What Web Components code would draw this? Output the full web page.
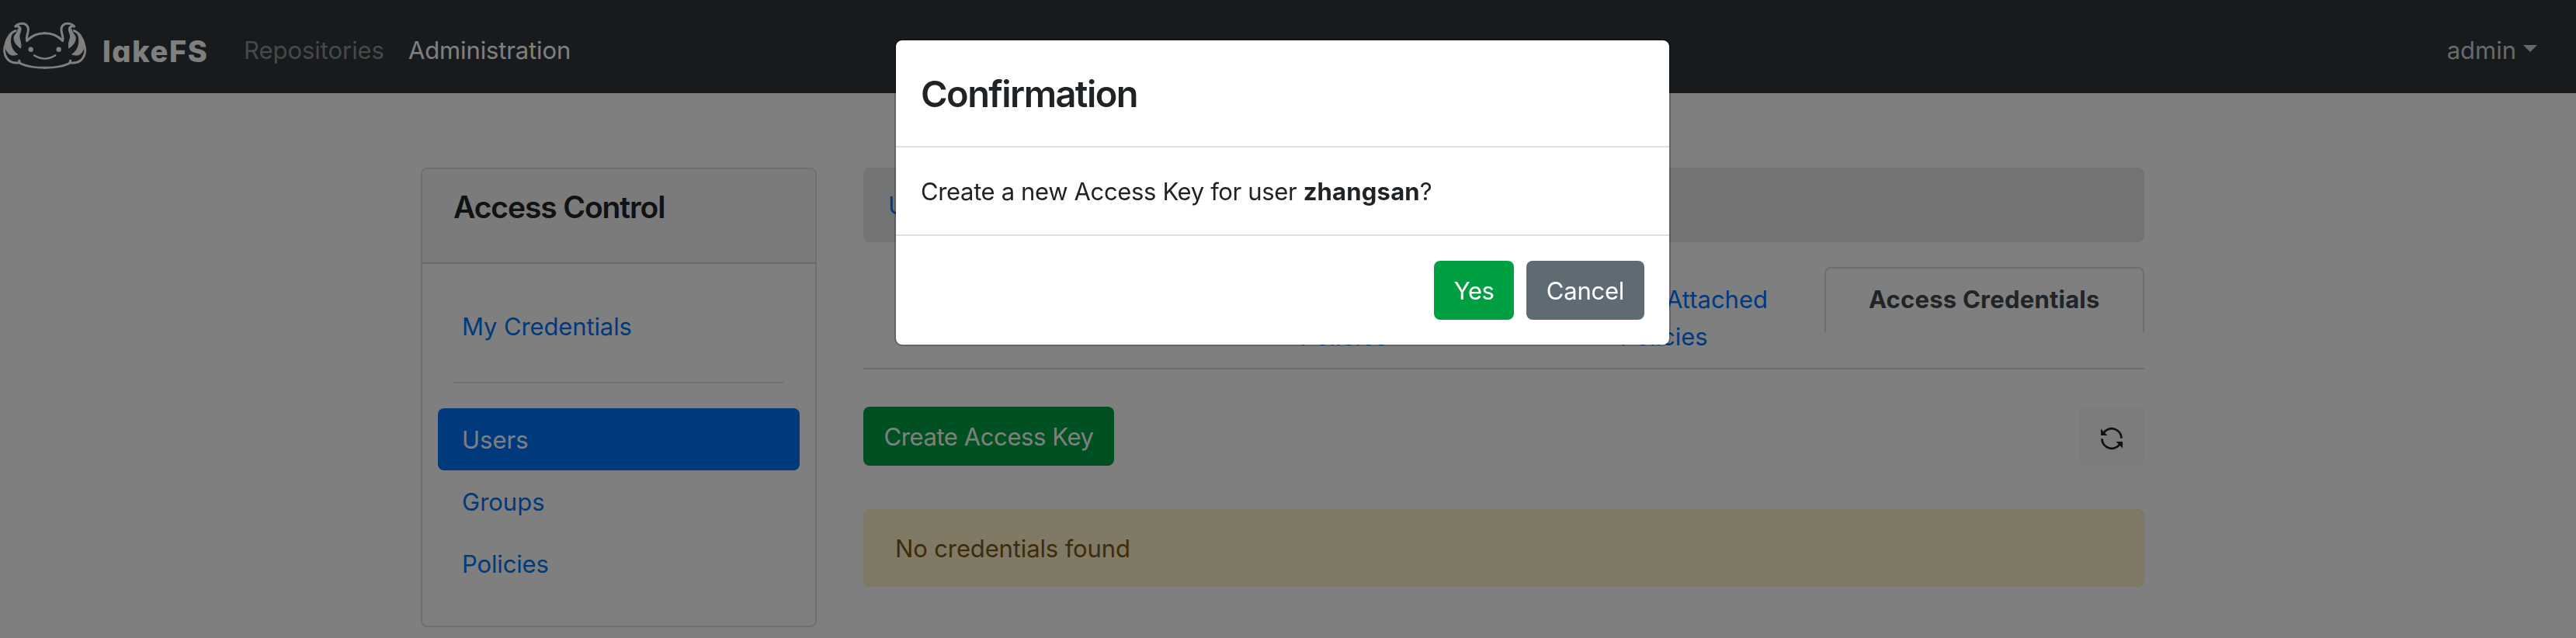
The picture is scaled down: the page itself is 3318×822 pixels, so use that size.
<!DOCTYPE html>
<html lang="en">
<head>
<meta charset="utf-8">
<title>lakeFS</title>
<style>
  html, body { margin: 0; height: 822px; overflow: hidden; }
  body {
    background: #fff;
    color: #212529;
    font: 400 31px/48px Inter, "Liberation Sans", sans-serif;
    --link: #0075fb;
    --green: #00a042;
  }
  main { display: flex; align-items: flex-start; gap: 60px; padding: 96px 0 0 542px; }
  section { width: 1650px; }
  lake-modal b { font-weight: 700; letter-spacing: .2px; }
</style>
</head>
<body>
<lake-navbar></lake-navbar>
<main>
  <lake-card heading="Access Control">
    <lake-nav-item style="letter-spacing:-.12px">My Credentials</lake-nav-item>
    <lake-rule></lake-rule>
    <lake-nav-item active>Users</lake-nav-item>
    <lake-nav-item>Groups</lake-nav-item>
    <lake-nav-item style="letter-spacing:-.15px">Policies</lake-nav-item>
  </lake-card>
  <section>
    <lake-breadcrumb><span>Users</span></lake-breadcrumb>
    <lake-tabs>
      <lake-tab>Group Memberships</lake-tab>
      <lake-tab>Directly Attached Policies</lake-tab>
      <lake-tab>Effective Attached Policies</lake-tab>
      <lake-tab active>Access Credentials</lake-tab>
    </lake-tabs>
    <lake-actions>
      <lake-button variant="success" style="letter-spacing:-.41px;width:323px">Create Access Key</lake-button>
      <lake-refresh slot="end"></lake-refresh>
    </lake-actions>
    <lake-alert>No credentials found</lake-alert>
  </section>
</main>
<lake-modal>
  <span slot="title">Confirmation</span>
  <span>Create a new Access Key for user <b>zhangsan</b>?</span>
  <lake-button slot="footer" variant="success" style="letter-spacing:-.6px;width:103px">Yes</lake-button>
  <lake-button slot="footer" variant="secondary" style="letter-spacing:-.23px;width:152px">Cancel</lake-button>
</lake-modal>

<script>
const define = (name, html, setup) => customElements.define(name, class extends HTMLElement {
  constructor() {
    super();
    this.attachShadow({ mode: 'open' }).innerHTML = html;
  }
  connectedCallback() { if (setup) setup(this, this.shadowRoot); }
});

define('lake-logo', `
<style>
  :host { display: flex; width: 267px; height: 120px; color: #fff; }
  svg { width: 120px; height: 75px; margin-top: 20px; flex: none; }
  span { margin: 34px 0 0 12px; font-weight: 800; font-size: 38px; line-height: 64px; letter-spacing: 1.6px; font-feature-settings: "cv11"; }
</style>
<svg viewBox="0 0 360 225" fill="none" stroke="currentColor" stroke-width="9" stroke-linecap="round" stroke-linejoin="round">
  <defs>
    <g id="gill">
      <path d="M104 97C99 84 111 66 109 50C106 33 91 28 76 32Q64 35 59 42Q74 38 78 50C80 62 67 72 72 88"/>
      <path stroke-width="3" fill="currentColor" d="M80 50C82 63 70 72 75 88C80 104 82 110 80 126C66 117 54 104 54 86C55 74 68 68 70 52Z"/>
      <path d="M60 59C40 66 26 88 22 110C14 128 15 150 27 166C40 183 56 184 76 182"/>
      <path stroke-width="3" fill="currentColor" d="M20 106C28 88 36 76 46 70C34 100 42 134 68 150C58 154 50 154 42 152C28 146 20 130 20 106Z"/>
      <path d="M104 97Q132 68 173 68"/>
      <path d="M74 174Q74 182 80 186Q116 202 173 202"/>
    </g>
  </defs>
  <use href="#gill"/>
  <use href="#gill" transform="translate(346 0) scale(-1 1)"/>
  <circle cx="119" cy="131" r="9.5" fill="currentColor" stroke="none"/>
  <circle cx="227" cy="131" r="9.5" fill="currentColor" stroke="none"/>
  <path d="M132 154Q173 180 214 154" stroke-width="7"/>
</svg>
<span>lakeFS</span>`);

define('lake-navbar', `
<style>
  :host { display: flex; height: 120px; background: #2e363c; line-height: 48px; }
  nav { display: flex; flex: 1; margin: 41px 0 0 47px; }
  a { color: #8e9091; margin-right: 31px; height: 48px; letter-spacing: -.05px; }
  a.on { color: #fff; letter-spacing: -.13px; }
  .user { display: flex; margin: 41px 50px 0 0; color: #d2d3d3; }
  .user i { margin: 17px 0 0 9px; height: 0; border: 9.6px solid transparent; border-top-color: currentColor; border-bottom: 0; }
</style>
<lake-logo></lake-logo>
<nav><a>Repositories</a><a class="on">Administration</a></nav>
<div class="user">admin<i></i></div>`);

define('lake-card', `
<style>
  :host { display: block; box-sizing: border-box; width: 510px; height: 592px; border: 2px solid #dfdfdf; border-radius: 8px; }
  header { box-sizing: border-box; height: 122px; padding: 25px 40px 23px; border-bottom: 2px solid #d7d7d7; background: #f7f7f7; border-radius: 6px 6px 0 0; font-weight: 600; font-size: 39px; letter-spacing: -1.1px; }
  div { display: flex; flex-direction: column; padding: 40px 20px; }
</style>
<header></header><div><slot></slot></div>`,
(el, root) => { root.querySelector('header').textContent = el.getAttribute('heading'); });

define('lake-nav-item', `
<style>
  :host { display: block; padding: 17px 28px 15px 31px; border-radius: 8px; color: var(--link); }
  :host([active]) { background: #0075fb; color: #fff; }
</style><slot></slot>`);

define('lake-rule', `
<style>:host { display: block; height: 2px; margin: 32px 20px; background: #e6e6e6; }</style>`);

define('lake-breadcrumb', `
<style>:host { display: block; height: 47px; padding: 25px 32px 24px; border-radius: 8px; background: #e6e8eb; color: var(--link); }</style>
<slot></slot>`);

define('lake-tabs', `
<style>:host { display: flex; align-items: flex-start; height: 130px; margin-top: 32px; border-bottom: 2px solid #dadada; }</style>
<slot></slot>`);

define('lake-tab', `
<style>
  :host { box-sizing: border-box; flex: 1 1 0; padding: 16px 32px; border: 2px solid transparent; border-radius: 8px 8px 0 0; text-align: center; color: var(--link); }
  :host([active]) { height: 84px; border-color: #dadcdc; border-bottom: 0; color: #43494f; font-weight: 700; letter-spacing: .23px; }
</style><slot></slot>`);

define('lake-actions', `
<style>:host { display: flex; justify-content: space-between; margin-top: 48px; height: 76px; }</style>
<slot></slot><slot name="end"></slot>`);

define('lake-button', `
<style>
  :host { display: block; height: 76px; line-height: 78px; border-radius: 8px; text-align: center; color: #fff; }
  :host([variant=success]) { background: var(--green); }
  :host([variant=secondary]) { background: #5f6b72; }
</style><slot></slot>`);

define('lake-refresh', `
<style>
  :host { display: flex; align-items: center; justify-content: center; width: 84px; height: 76px; border-radius: 8px; background: #f5faf8; color: #212529; }
  svg { display: block; width: 32px; height: 32px; margin-top: 6px; }
</style>
<svg viewBox="0 0 16 16" fill="none" stroke="currentColor" stroke-width="1.4">
  <path d="M2.7 4.5A6.3 6.3 0 0 1 14.3 7.9M13.3 11.5A6.3 6.3 0 0 1 1.7 8.1"/>
  <path stroke="none" fill="currentColor" d="M1 1.8V6H5.2ZM15 14.2V10H10.8Z"/>
</svg>`);

define('lake-alert', `
<style>:host { display: block; margin-top: 56px; padding: 25px 39px 23px; height: 48px; border: 2px solid #ffeebc; border-radius: 8px; background: #fff3cb; color: #7e5714; letter-spacing: -.13px; }</style>
<slot></slot>`);

define('lake-modal', `
<style>
  :host { position: fixed; inset: 0; background: rgba(0,0,0,.5); display: block; }
  article { width: 996px; margin: 50px 0 0 1152px; border: 2px solid rgba(0,0,0,.2); border-radius: 10px; background: #fff; background-clip: padding-box; color: #1f2326; }
  header { padding: 33px 32px 31px; border-bottom: 2px solid #dae0e4; font-weight: 600; font-size: 47px; line-height: 72px; letter-spacing: -1.55px; }
  p { margin: 0; padding: 33px 32px 31px; letter-spacing: -.36px; }
  ::slotted(span) { white-space: nowrap; }
  footer { display: flex; justify-content: flex-end; gap: 16px; padding: 32px; border-top: 2px solid #dae0e4; }
</style>
<article>
  <header><slot name="title"></slot></header>
  <p><slot></slot></p>
  <footer><slot name="footer"></slot></footer>
</article>`);
</script>
</body>
</html>
